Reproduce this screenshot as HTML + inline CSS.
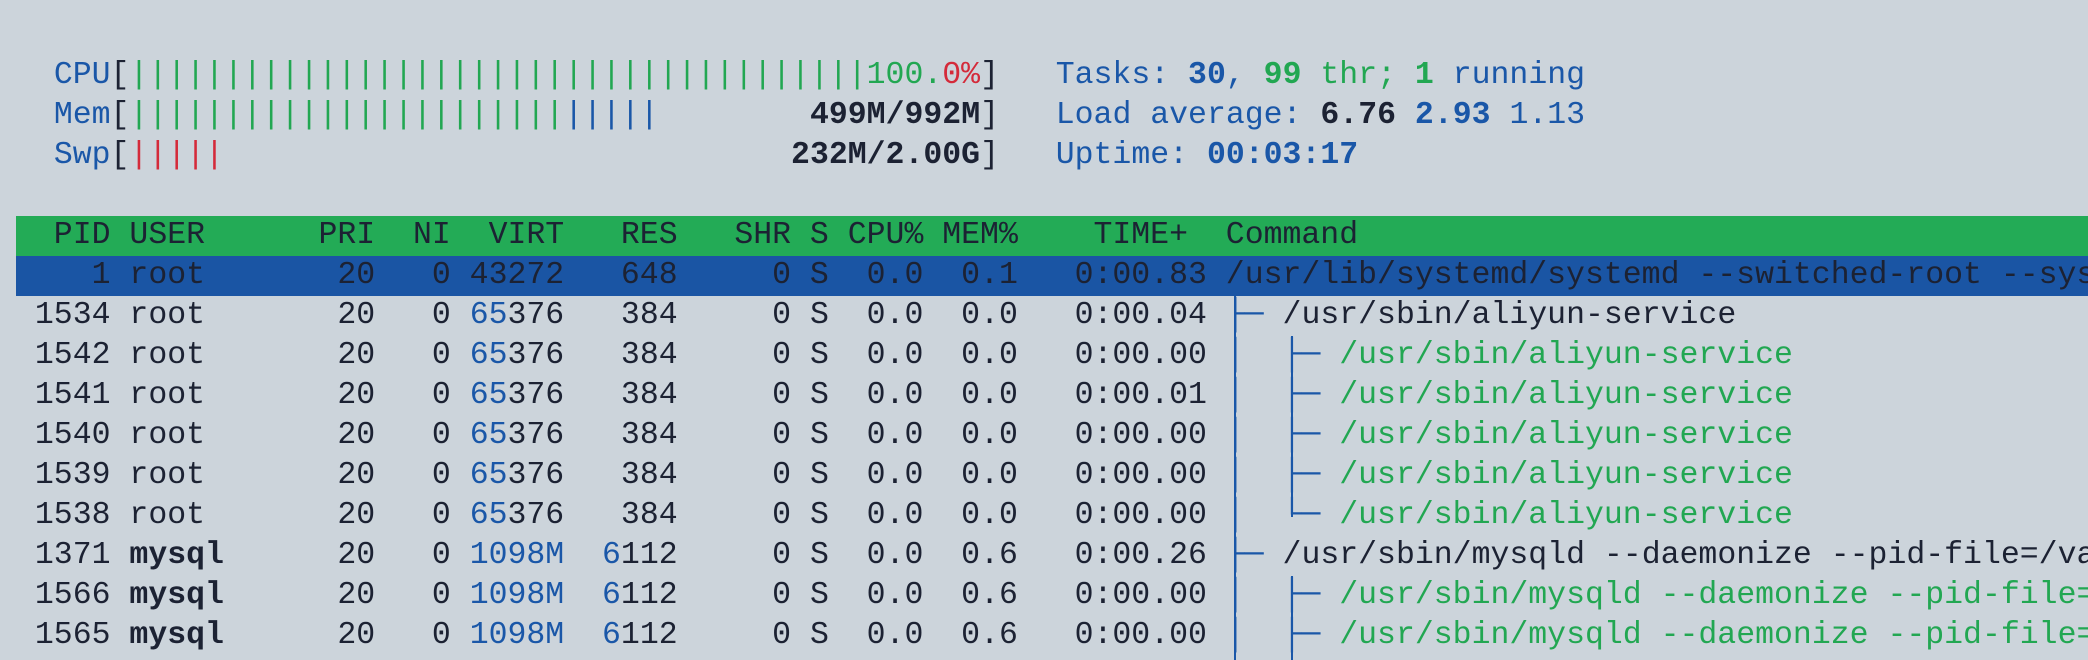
<!DOCTYPE html>
<html><head><meta charset="utf-8"><style>
html,body{margin:0;padding:0;}
body{width:2088px;height:660px;background:#ccd4db;overflow:hidden;position:relative;font-family:"Liberation Mono","DejaVu Sans Mono",monospace;font-size:31.5px;color:#1c2233;}
.l{position:absolute;left:16px;right:0;height:40px;line-height:40px;white-space:pre;overflow:hidden;}
.hd{background:#23ab56;}
.sel{background:#1a55a4;}
.b{color:#1a57a8}
.g{color:#22a752}
.r{color:#d42a3a}
.t{color:#1a57a8}
.v{position:absolute;width:2px;background:#1a57a8;}
</style></head><body>
<div class="l" style="top:56px">  <span class="b">CPU</span>[<span class="g">|||||||||||||||||||||||||||||||||||||||100.</span><span class="r">0%</span>]   <span class="b">Tasks: <b>30</b>, </span><span class="g"><b>99</b> thr; </span><b class="g">1</b><span class="b"> running</span></div>
<div class="l" style="top:96px">  <span class="b">Mem</span>[<span class="g">|||||||||||||||||||||||</span><span class="b">|||||</span>        <b>499M/992M</b>]   <span class="b">Load average: </span><b>6.76</b> <b class="b">2.93</b> <span class="b">1.13</span></div>
<div class="l" style="top:136px">  <span class="b">Swp</span>[<span class="r">|||||</span>                              <b>232M/2.00G</b>]   <span class="b">Uptime: <b>00:03:17</b></span></div>
<div class="l hd" style="top:216px">  PID USER      PRI  NI  VIRT   RES   SHR S CPU% MEM%    TIME+  Command</div>
<div class="l sel" style="top:256px">    1 root       20   0 43272   648     0 S  0.0  0.1   0:00.83 /usr/lib/systemd/systemd --switched-root --system --deserialize 22</div>
<div class="l" style="top:296px"> 1534 root       20   0 <span class="b">65</span>376   384     0 S  0.0  0.0   0:00.04 <span class="t">├─</span> /usr/sbin/aliyun-service</div>
<div class="l" style="top:336px"> 1542 root       20   0 <span class="b">65</span>376   384     0 S  0.0  0.0   0:00.00 <span class="t">│  ├─</span> <span class="g">/usr/sbin/aliyun-service</span></div>
<div class="l" style="top:376px"> 1541 root       20   0 <span class="b">65</span>376   384     0 S  0.0  0.0   0:00.01 <span class="t">│  ├─</span> <span class="g">/usr/sbin/aliyun-service</span></div>
<div class="l" style="top:416px"> 1540 root       20   0 <span class="b">65</span>376   384     0 S  0.0  0.0   0:00.00 <span class="t">│  ├─</span> <span class="g">/usr/sbin/aliyun-service</span></div>
<div class="l" style="top:456px"> 1539 root       20   0 <span class="b">65</span>376   384     0 S  0.0  0.0   0:00.00 <span class="t">│  ├─</span> <span class="g">/usr/sbin/aliyun-service</span></div>
<div class="l" style="top:496px"> 1538 root       20   0 <span class="b">65</span>376   384     0 S  0.0  0.0   0:00.00 <span class="t">│  └─</span> <span class="g">/usr/sbin/aliyun-service</span></div>
<div class="l" style="top:536px"> 1371 <b>mysql</b>      20   0 <span class="b">1098M</span>  <span class="b">6</span>112     0 S  0.0  0.6   0:00.26 <span class="t">├─</span> /usr/sbin/mysqld --daemonize --pid-file=/var/run/mysqld/mysqld.pid</div>
<div class="l" style="top:576px"> 1566 <b>mysql</b>      20   0 <span class="b">1098M</span>  <span class="b">6</span>112     0 S  0.0  0.6   0:00.00 <span class="t">│  ├─</span> <span class="g">/usr/sbin/mysqld --daemonize --pid-file=/var/run/mysqld/mysqld.pid</span></div>
<div class="l" style="top:616px"> 1565 <b>mysql</b>      20   0 <span class="b">1098M</span>  <span class="b">6</span>112     0 S  0.0  0.6   0:00.00 <span class="t">│  ├─</span> <span class="g">/usr/sbin/mysqld --daemonize --pid-file=/var/run/mysqld/mysqld.pid</span></div>
<div class="v" style="left:1234px;top:296px;height:364px"></div>
<div class="v" style="left:1291px;top:336px;height:181px"></div>
<div class="v" style="left:1291px;top:576px;height:84px"></div>
</body></html>
